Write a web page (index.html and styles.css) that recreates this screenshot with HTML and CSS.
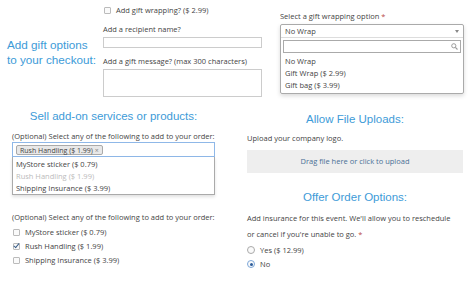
FILE: index.html
```html
<!DOCTYPE html>
<html lang="en">
<head>
    <meta charset="UTF-8">
    <meta name="viewport" content="width=device-width, initial-scale=1.0">
    <title>Checkout add-ons</title>
    <link rel="stylesheet" href="styles.css">
</head>
<body>
    <div class="gift">
        <h2 class="gift-title">Add gift options<br>to your checkout:</h2>
        <div class="gift-fields">
            <label class="check"><span class="box"></span>Add gift wrapping? ($ 2.99)</label>
            <label class="field-label">Add a recipient name?</label>
            <div class="text-input"></div>
            <label class="field-label">Add a gift message? (max 300 characters)</label>
            <div class="text-area"></div>
        </div>
        <div class="gift-select">
            <label class="field-label">Select a gift wrapping option <span class="req">*</span></label>
            <div class="dropdown">
                <div class="select-head">No Wrap<span class="arrow"></span></div>
                <div class="search">
                    <svg width="7" height="7" viewBox="0 0 10 10"><circle cx="4" cy="4" r="3" fill="none" stroke="#999" stroke-width="1.4"/><path d="M6.2 6.2 9.3 9.3" stroke="#999" stroke-width="1.6"/></svg>
                </div>
                <ul class="options">
                    <li>No Wrap</li>
                    <li>Gift Wrap ($ 2.99)</li>
                    <li>Gift bag ($ 3.99)</li>
                </ul>
            </div>
        </div>
    </div>

    <div class="columns">
        <div class="col col-left">
            <h3 class="heading">Sell add-on services or products:</h3>
            <label class="field-label first">(Optional) Select any of the following to add to your order:</label>
            <div class="multi">
                <span class="tag">Rush Handling ($ 1.99) <span class="tag-x">&times;</span></span>
            </div>
            <ul class="multi-list">
                <li>MyStore sticker ($ 0.79)</li>
                <li class="used">Rush Handling ($ 1.99)</li>
                <li>Shipping Insurance ($ 3.99)</li>
            </ul>
            <label class="field-label second">(Optional) Select any of the following to add to your order:</label>
            <div class="check-list">
                <label class="check"><span class="box"></span>MyStore sticker ($ 0.79)</label>
                <label class="check"><span class="box checked"></span>Rush Handling ($ 1.99)</label>
                <label class="check"><span class="box"></span>Shipping Insurance ($ 3.99)</label>
            </div>
        </div>
        <div class="col col-right">
            <h3 class="heading">Allow File Uploads:</h3>
            <label class="field-label upload-label">Upload your company logo.</label>
            <div class="dropzone">Drag file here or click to upload</div>
            <h3 class="heading offer">Offer Order Options:</h3>
            <p class="note">Add insurance for this event. We'll allow you to reschedule<br>or cancel if you're unable to go. <span class="req">*</span></p>
            <label class="radio"><span class="dot"></span>Yes ($ 12.99)</label>
            <label class="radio"><span class="dot on"></span>No</label>
        </div>
    </div>
</body>
</html>
```

FILE: styles.css
```css
body { margin: 0; font-family: "Open Sans", sans-serif; font-size: 7.5px; color: #444; background: #fff; }
ul { list-style: none; margin: 0; padding: 0; }
.req { color: #b94a48; }

/* gift row */
.gift { display: flex; height: 100px; }
.gift-title { width: 96px; margin: 38px 0 0; padding-left: 7px; box-sizing: border-box; white-space: nowrap; font-family: "Liberation Sans", Arial, sans-serif; font-weight: normal; font-size: 11.7px; line-height: 14.5px; color: #3d9bd8; }
.gift-fields { width: 159px; margin-left: 7px; padding-top: 4px; }
.gift-select { width: 184px; margin-left: 18px; padding-top: 10px; }
.field-label { display: block; line-height: 12px; }
.gift-fields .field-label { margin-top: 7px; }
.gift-fields .field-label + .text-input, .gift-fields .field-label + .text-area { margin-top: 2px; }
.text-input { height: 11px; border: 1px solid #ccc; box-sizing: border-box; }
.text-area { height: 28px; border: 1px solid #ccc; box-sizing: border-box; }

.check { display: flex; align-items: center; line-height: 12px; }
.box { width: 5px; height: 5px; border: 1px solid #bbb; border-radius: 1px; margin: 0 5px 0 1px; background: #fafafa; position: relative; }
.box.checked::after { content: ""; position: absolute; left: 1px; top: -2px; width: 2px; height: 5px; border: solid #3b5f8a; border-width: 0 1.5px 1.5px 0; transform: rotate(40deg); }

.dropdown { margin-top: 2px; border: 1px solid #aaa; border-radius: 2px; box-shadow: 0 2px 4px rgba(0,0,0,0.15); padding-bottom: 2px; }
.select-head { height: 12px; line-height: 12px; padding: 0 4px; display: flex; justify-content: space-between; align-items: center; border-bottom: 1px solid #ddd; }
.arrow { border: 2px solid transparent; border-top: 3px solid #888; border-bottom: 0; }
.search { margin: 2px 2px 0; height: 11px; border: 1px solid #aaa; display: flex; justify-content: flex-end; align-items: center; padding-right: 2px; }
.options { padding-top: 2px; }
.options li { line-height: 12px; padding: 0 4px; }

/* lower columns */
.columns { display: flex; padding-left: 12px; }
.col-left { width: 203px; }
.col-right { width: 216px; margin-left: 32px; }
.heading { margin: 0; font-family: "Liberation Sans", Arial, sans-serif; font-weight: normal; font-size: 11.5px; line-height: 16px; color: #3d9bd8; text-align: center; }
.col-left .heading { margin-top: 8px; }
.col-right .heading { margin-top: 11px; }
.field-label.first { margin-top: 6px; }
.multi { height: 15px; border: 1px solid #8fb8e8; box-sizing: border-box; padding: 2px 3px; }
.tag { display: inline-block; height: 10px; line-height: 9px; padding: 0 3px; border: 1px solid #aaa; border-radius: 2px; background: #e8e8e8; box-sizing: border-box; font-size: 7px; }
.tag-x { color: #888; }
.multi-list { border: 1px solid #aaa; border-top: 0; padding: 1px 0 0; box-shadow: 0 2px 3px rgba(0,0,0,0.12); }
.multi-list li { line-height: 12px; padding: 0 3px; }
.multi-list li.used { color: #bbb; }
.field-label.second { margin-top: 16px; }
.check-list { margin-top: 2px; }
.check-list .check { line-height: 14px; }

.upload-label { margin-top: 5px; }
.dropzone { margin-top: 6px; height: 23px; line-height: 23px; background: #eee; text-align: center; color: #4a7096; }
.col-right .heading.offer { margin-top: 16px; }
.note { margin: 5px 0 1px; line-height: 16px; white-space: nowrap; }
.radio { display: flex; align-items: center; line-height: 14px; }
.dot { width: 6px; height: 6px; border: 1px solid #aaa; border-radius: 50%; margin-right: 5px; position: relative; background: #fafafa; }
.dot.on { border-color: #7da7d9; }
.dot.on::after { content: ""; position: absolute; left: 1.5px; top: 1.5px; width: 3px; height: 3px; border-radius: 50%; background: #2d5d9a; }
```
